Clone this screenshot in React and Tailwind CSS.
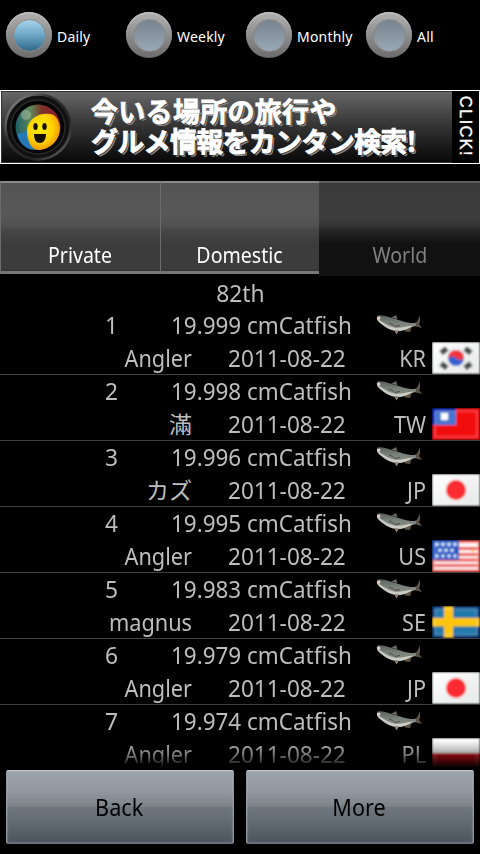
import React, { useState } from 'react'

const PERIODS = ['Daily', 'Weekly', 'Monthly', 'All']
const TABS = ['Private', 'Domestic', 'World']

const CATCHES = [
  { rank: 1, size: '19.999', angler: 'Angler', country: 'KR' },
  { rank: 2, size: '19.998', angler: '滿', country: 'TW', wide: true },
  { rank: 3, size: '19.996', angler: 'カズ', country: 'JP', wide: true },
  { rank: 4, size: '19.995', angler: 'Angler', country: 'US' },
  { rank: 5, size: '19.983', angler: 'magnus', country: 'SE' },
  { rank: 6, size: '19.979', angler: 'Angler', country: 'JP' },
  { rank: 7, size: '19.974', angler: 'Angler', country: 'PL' },
]

function Defs() {
  return (
    <svg className="absolute w-0 h-0" aria-hidden="true">
      <defs>
        <filter id="soft" x="0" y="0" width="1" height="1">
          <feGaussianBlur stdDeviation="0.8" edgeMode="duplicate" />
        </filter>
        <linearGradient id="fishBody" x1="0" y1="0" x2="0" y2="1">
          <stop offset="0" stopColor="#59615c" />
          <stop offset="0.5" stopColor="#7b837d" />
          <stop offset="1" stopColor="#8c8c81" />
        </linearGradient>
        <linearGradient id="white" x1="0" y1="0" x2="1" y2="1">
          <stop offset="0" stopColor="#fff" />
          <stop offset="1" stopColor="#e4e8e6" />
        </linearGradient>
      </defs>
    </svg>
  )
}

function Catfish() {
  return (
    <svg width="48" height="22" viewBox="0 0 48 22" className="mt-px shrink-0">
      <path d="M15 4 L20 1 L21.500 5Z" fill="#6b695f" />
      <path d="M28 15 L29 17.500 L34 18 L36 12Z" fill="#5e5142" />
      <path d="M37 10 L41 7.500 L44 1.500 L44 8 L43 10 L46 14 L40 12.500Z" fill="#5b554a" />
      <path d="M1.500 1.500 C6 .8 12 3 17 4.500 C24 6 30 9.500 40 9 L40 12 C34 13 30 16 24 17 C15 18 7 12 3 8 C1 6 1 4 1.500 1.500Z" fill="url(#fishBody)" />
      <path d="M1 4.500 C7 8 11 12 18 13.500 C25 14.500 30 12 38 11.500 C34 13.500 30 16 24 17 C15 17.500 8 12 2.500 7.500Z" fill="#c9ccc4" />
      <path d="M13 9 L17 10.500 L19 12.500 L24 11.500" stroke="#474e49" strokeWidth="1" fill="none" />
      <path d="M.8 3 L4 2.500 L4.500 5 L1.500 6.500Z" fill="#e2cbc9" />
      <path d="M18 16 L20.500 20.500 L23 16.500Z" fill="#8b8375" />
    </svg>
  )
}

function FlagArt({ country }) {
  switch (country) {
    case 'KR':
      return (
        <>
          <rect width="48" height="32" fill="url(#white)" />
          <g stroke="#4b4b4b" strokeWidth="5.500">
            <path d="M9 11 L15 6.500 M33 6.500 L39 11 M9 21.500 L15 26 M33 26 L39 21.500" />
          </g>
          <circle cx="24" cy="16" r="8" fill="#3461cf" />
          <path d="M16 16 A8 8 0 0 1 32 16 C30 19 26 18 24 16 S18 14 16 16Z" fill="#f5343a" />
        </>
      )
    case 'TW':
      return (
        <>
          <rect width="48" height="32" fill="#f20a0e" />
          <rect width="24" height="17" fill="#0424b4" />
          <rect x="3" y="3" width="21" height="14" fill="#4775d2" />
          <rect x="9" y="5" width="7" height="7" fill="#fff" />
        </>
      )
    case 'JP':
      return (
        <>
          <rect width="48" height="32" fill="url(#white)" />
          <circle cx="24" cy="16" r="10" fill="#fc2b30" />
        </>
      )
    case 'US':
      return (
        <>
          <rect width="48" height="32" fill="#fdf6f4" />
          <path d="M0 1.500H48 M26 8.500H48 M26 14.500H48 M0 20H48 M0 25.500H48 M0 31H48" stroke="#ee4d4d" strokeWidth="3" />
          <path d="M0 0H2V32H0Z M46 0H48V32H46Z" fill="#e96a5c" />
          <rect width="27" height="20" fill="#2257c4" />
          <g fill="#e8f6ff">
            {[5, 11, 17, 23].map((x) => (
              <g key={x}>
                <circle cx={x} cy="4.500" r="1.700" />
                <circle cx={x} cy="16" r="1.700" />
              </g>
            ))}
            {[8, 14, 20].map((x) => (
              <circle key={x} cx={x} cy="10.300" r="1.700" />
            ))}
          </g>
          <circle cx="41" cy="10.500" r="1.500" fill="#ffc04a" />
        </>
      )
    case 'SE':
      return (
        <>
          <rect width="48" height="32" fill="#033a7c" />
          <rect x="3" y="3" width="42" height="26" fill="#2079ac" />
          <path d="M12 0H21V32H12Z M0 12H48V20.500H0Z" fill="#fcc40f" />
        </>
      )
    default:
      return (
        <>
          <rect width="48" height="15" fill="#fff" />
          <rect y="15" width="48" height="17" fill="#d40d17" />
        </>
      )
  }
}

function Flag({ country }) {
  return (
    <svg width="48" height="32" viewBox="0 0 48 32" className="shrink-0">
      <g filter="url(#soft)">
        <FlagArt country={country} />
        <rect x="3" y="3" width="42" height="26" fill="none" stroke="#fff" strokeWidth="1.300" opacity=".3" />
      </g>
    </svg>
  )
}

function Radio({ label, checked, onClick }) {
  return (
    <button onClick={onClick} className="flex w-[120px] items-center pl-1.5 text-left">
      <span className="flex size-[46px] shrink-0 items-center justify-center rounded-full bg-linear-to-b from-[#b2b2b2] to-[#6b6b6b] shadow-[inset_0_1px_1px_#c8c8c8]">
        <span
          className={`size-[33px] rounded-full border border-[#8b8b8b] ${
            checked
              ? 'bg-linear-to-b from-[#a6d5ec] via-[#6ba5c4] to-[#2f6788]'
              : 'bg-linear-to-b from-[#77838e] to-[#9aa9b6]'
          }`}
        />
      </span>
      <span className="ml-[5px] mt-1 whitespace-nowrap text-[14px] leading-5 tracking-[0.2px] text-white">{label}</span>
    </button>
  )
}

function CameraLogo() {
  return (
    <svg width="70" height="70" viewBox="0 0 70 70" className="shrink-0">
      <defs>
        <linearGradient id="ring" x1="0" y1="0" x2="1" y2="1">
          <stop offset="0" stopColor="#a0a0a0" />
          <stop offset=".35" stopColor="#333" />
          <stop offset=".7" stopColor="#222" />
          <stop offset="1" stopColor="#777" />
        </linearGradient>
        <linearGradient id="lens" x1="0" y1=".4" x2="1" y2=".3">
          <stop offset="0" stopColor="#1f5f68" />
          <stop offset=".35" stopColor="#5d8a5a" />
          <stop offset=".6" stopColor="#7c3526" />
          <stop offset="1" stopColor="#8b1532" />
        </linearGradient>
        <radialGradient id="face" cx=".4" cy=".4" r=".65">
          <stop offset="0" stopColor="#fff000" />
          <stop offset=".6" stopColor="#ffd000" />
          <stop offset="1" stopColor="#ee8d00" />
        </radialGradient>
      </defs>
      <circle cx="37" cy="36" r="32.500" fill="#111" stroke="url(#ring)" strokeWidth="2.500" />
      <circle cx="37" cy="36" r="27" fill="#050505" stroke="#292929" strokeWidth="1.500" />
      <circle cx="37" cy="36" r="22.500" fill="url(#lens)" />
      <path d="M16 43 C18 53 26 59 34 59 L26 40Z" fill="#2579b7" />
      <circle cx="25" cy="24" r="5" fill="#d6e0c8" opacity=".35" />
      <path d="M26 40 C26 29 37 21 49 23 C55 23 59 31 59 37 C59 49 49 59 37 59 C30 59 26 49 26 40Z" fill="url(#face)" />
      <ellipse cx="34.500" cy="35.500" rx="2.200" ry="3.500" fill="#161000" />
      <ellipse cx="43.500" cy="35.500" rx="2.200" ry="3.500" fill="#161000" />
      <path d="M33 43 H45 C45 49 42 52 39 52 C35 52 33 49 33 43Z" fill="#171000" />
    </svg>
  )
}

function Banner() {
  return (
    <div className="mt-5 flex h-[74px] border border-white bg-linear-to-b from-[#686868] via-[#333] to-[#080808] shadow-[inset_0_0_0_1px_#333]">
      <CameraLogo />
      <div className="ml-[20px] flex flex-1 flex-col pt-[5px] font-['Noto_Sans_CJK_JP',sans-serif] font-bold whitespace-nowrap text-white [-webkit-text-stroke:0.8px_#fff] [text-shadow:1px_1px_0_#333,2px_2px_0_#888]">
        <div className="h-[30px] text-[27px] leading-[29px] tracking-[0.3px]">今いる場所の旅行や</div>
        <div className="h-[30px] text-[27px] leading-[29px] tracking-[-0.7px]">グルメ情報をカンタン検索!</div>
      </div>
      <div className="flex w-[27px] items-center justify-center bg-black pr-px font-['Liberation_Sans',sans-serif] text-[16px] leading-none tracking-[1.6px] text-white [writing-mode:vertical-rl] [-webkit-text-stroke:0.4px_#fff]">
        CLICK!
      </div>
    </div>
  )
}

function TabBar({ active, onSelect }) {
  return (
    <div className="mt-[17px] flex h-[95px]">
      {TABS.map((tab) => {
        const selected = tab === active
        return (
          <button
            key={tab}
            onClick={() => onSelect(tab)}
            className={`flex items-end justify-center border-t-2 text-[22px] leading-[30px] ${
              selected
                ? 'flex-1 border-t-[#5d5d5d] bg-[linear-gradient(#3a3a3a_0,#3d3d3d_35px,#333_44px,#292929_45px,#111_61px,#111_100%)] pb-[7px] text-[#808080]'
                : 'mb-0.5 w-[159.5px] border-b-[3px] border-l border-t-[#8a8a8a] border-b-[#777] border-l-[#6c6c6c] bg-[linear-gradient(#545454_0,#585858_30px,#505050_44px,#494949_45px,#3c3c3c_61px,#3c3c3c_86px,#303030_100%)] pb-0.5 text-white'
            }`}
          >
            <span className="inline-block scale-x-[0.89]">{tab}</span>
          </button>
        )
      })}
    </div>
  )
}

function CatchRow({ rank, size, angler, country, wide }) {
  return (
    <li className="h-[66px] border-b border-[#424242]">
      <div className="flex h-[33px] items-center pb-0.5">
        <span className="w-[118px] origin-right scale-x-[0.95] text-right">{rank}</span>
        <span className="ml-[53px] w-[205px] origin-left scale-x-[0.935] whitespace-nowrap">{size} cmCatfish</span>
        <Catfish />
      </div>
      <div className="flex h-8 items-center">
        <span className={`w-[192px] text-right ${wide ? 'text-[23px]' : 'origin-right scale-x-[0.905]'}`}>{angler}</span>
        <span className="ml-9 w-[126px] origin-left scale-x-[0.94] whitespace-nowrap">2011-08-22</span>
        <span className="mr-1.5 flex-1 origin-right scale-x-[0.9] text-right">{country}</span>
        <Flag country={country} />
      </div>
    </li>
  )
}

function BigButton({ children }) {
  return (
    <button className="h-[74px] flex-1 rounded-[2px] border border-t-[#c8ccd1] border-x-[#8d959f] border-b-[#687079] bg-[linear-gradient(#9da4ad_0,#8f969e_30%,#7c8389_49%,#70777e_50%,#687079_62%,#4b535e_100%)] pt-0.5 pr-0.5 text-[23.5px] text-black shadow-[inset_0_0_2px_#aeb5bd]">
      <span className="inline-block scale-x-[0.92]">{children}</span>
    </button>
  )
}

export default function App() {
  const [period, setPeriod] = useState('Daily')
  const [tab, setTab] = useState('World')

  return (
    <div className="flex h-[854px] w-[480px] flex-col overflow-hidden bg-black font-['Noto_Sans','Noto_Sans_CJK_JP',sans-serif]">
      <Defs />
      <div className="flex h-[70px] shrink-0">
        {PERIODS.map((p) => (
          <Radio key={p} label={p} checked={p === period} onClick={() => setPeriod(p)} />
        ))}
      </div>
      <Banner />
      <TabBar active={tab} onSelect={setTab} />
      <div className="relative h-[492px] shrink-0 overflow-hidden text-[24px] leading-8 text-[#bebebe]">
        <div className="flex h-[33px] items-center justify-center">
          <span className="inline-block scale-x-[0.95]">82th</span>
        </div>
        <ul>
          {CATCHES.map((c) => (
            <CatchRow key={c.rank} {...c} />
          ))}
        </ul>
        <div className="absolute inset-x-0 bottom-0 h-7 bg-linear-to-b from-transparent via-black/35 to-black" />
      </div>
      <div className="flex gap-3 px-1.5 pt-0.5">
        <BigButton>Back</BigButton>
        <BigButton>More</BigButton>
      </div>
    </div>
  )
}
